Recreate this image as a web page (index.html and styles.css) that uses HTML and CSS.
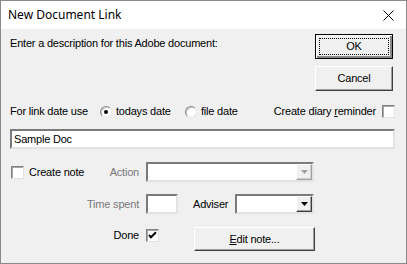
FILE: index.html
```html
<!DOCTYPE html>
<html lang="en">
<head>
    <meta charset="UTF-8">
    <title>New Document Link</title>
    <link rel="stylesheet" href="styles.css">
</head>
<body>
    <div class="window">
        <div class="titlebar">
            <span class="title">New Document Link</span>
            <svg class="close" width="11" height="11" viewBox="0 0 11 11">
                <path d="M0.5 0.5 L10.5 10.5 M10.5 0.5 L0.5 10.5" stroke="#000" stroke-width="1" fill="none"/>
            </svg>
        </div>

        <div class="content">
            <div class="top">
                <div class="prompt">Enter a description for this Adobe document:</div>
                <div class="buttons">
                    <button class="btn btn-default"><span class="focus">OK</span></button>
                    <button class="btn">Cancel</button>
                </div>
            </div>

            <div class="row date-row">
                <span class="date-label">For link date use</span>
                <span class="opt opt-first"><span class="radio checked"></span>todays date</span>
                <span class="opt"><span class="radio"></span>file date</span>
                <span class="diary"><span>Create diary <u>r</u>eminder</span><span class="check"></span></span>
            </div>

            <div class="textbox desc">Sample Doc</div>

            <div class="row ctl-row">
                <div class="lead lead-split">
                    <span class="note"><span class="check"></span>Create note</span>
                    <span class="muted">Action</span>
                </div>
                <div class="textbox combo action">
                    <span class="drop disabled"><svg width="7" height="4" viewBox="0 0 7 4"><path d="M0 0h7L3.5 4z" fill="#a0a0a0"/></svg></span>
                </div>
            </div>

            <div class="row ctl-row">
                <div class="lead"><span class="muted">Time spent</span></div>
                <div class="textbox time"></div>
                <span class="adviser-label">Adviser</span>
                <div class="textbox combo adviser">
                    <span class="drop"><svg width="7" height="4" viewBox="0 0 7 4"><path d="M0 0h7L3.5 4z" fill="#000"/></svg></span>
                </div>
            </div>

            <div class="row done-row">
                <div class="lead">Done</div>
                <span class="check done-check">
                    <svg width="9" height="9" viewBox="0 0 9 9"><path d="M1 4 L3 6.2 L8 1.2" stroke="#000" stroke-width="2" fill="none"/></svg>
                </span>
                <button class="btn edit"><span><u>E</u>dit note...</span></button>
            </div>
        </div>
    </div>
</body>
</html>
```

FILE: styles.css
```css
:root {
    --face: #f0f0f0;
    --edge: #7a7a7a;
    --muted: #7a7a7a;
}

body {
    margin: 0;
    background: var(--face);
    font-family: 'Liberation Sans', Arial, sans-serif;
    font-size: 11px;
    letter-spacing: -0.2px;
    color: #000;
}

.window {
    width: 407px;
    height: 264px;
    box-sizing: border-box;
    border: 1px solid #8a8a8a;
    background: var(--face);
}

.titlebar {
    height: 28px;
    background: #fff;
    display: flex;
    align-items: center;
    padding-left: 7px;
}

.title {
    font-family: 'Noto Sans', sans-serif;
    font-size: 12px;
    letter-spacing: 0;
    color: #000;
    margin-top: -1px;
}

.close {
    margin-left: auto;
    margin-right: 12px;
    margin-top: 1px;
}

.content {
    padding: 5px 11px 0 9px;
    line-height: 13px;
}

.top {
    display: flex;
    justify-content: space-between;
}

.prompt {
    margin-top: 3px;
}

.buttons {
    display: flex;
    flex-direction: column;
    gap: 7px;
    margin-right: 2px;
}

.btn {
    font: inherit;
    letter-spacing: inherit;
    color: #000;
    width: 78px;
    height: 25px;
    padding: 0;
    background: var(--face);
    border: 1px solid;
    border-color: #fff #404040 #404040 #fff;
    box-shadow: inset -1px -1px 0 #a0a0a0;
    display: flex;
    align-items: center;
    justify-content: center;
}

.btn-default {
    border: 1px solid #000;
    box-shadow: inset 1px 1px 0 #fff, inset -2px -2px 0 #8a8a8a;
    padding: 3px;
}

.focus {
    display: flex;
    align-items: center;
    justify-content: center;
    width: 100%;
    height: 100%;
    box-sizing: border-box;
    border: 1px dotted #000;
}

.row {
    display: flex;
    align-items: center;
}

.date-row {
    margin-top: 14px;
    height: 13px;
}

.date-label {
    width: 90px;
}

.opt {
    display: flex;
    align-items: center;
    gap: 4px;
}

.opt-first {
    width: 85px;
}

.radio {
    width: 12px;
    height: 12px;
    box-sizing: border-box;
    border-radius: 50%;
    border: 1px solid;
    border-color: #8a8a8a #e6e6e6 #e6e6e6 #8a8a8a;
    background: #fff;
    box-shadow: inset 1px 1px 0 #c8c8c8;
    position: relative;
}

.radio.checked::after {
    content: "";
    position: absolute;
    left: 3px;
    top: 3px;
    width: 4px;
    height: 4px;
    border-radius: 50%;
    background: #000;
}

.diary {
    margin-left: auto;
    display: flex;
    align-items: center;
    gap: 6px;
}

.check {
    width: 13px;
    height: 13px;
    box-sizing: border-box;
    border: 1px solid;
    border-color: #808080 #e3e3e3 #e3e3e3 #808080;
    box-shadow: inset 1px 1px 0 #a8a8a8;
    background: #fff;
    display: flex;
    align-items: center;
    justify-content: center;
}

.textbox {
    box-sizing: border-box;
    height: 20px;
    background: #fff;
    border: 2px solid;
    border-color: #7a7a7a #e3e3e3 #e3e3e3 #7a7a7a;
}

.desc {
    margin-top: 11px;
    width: 385px;
    padding: 1px 2px;
    line-height: 15px;
}

.ctl-row {
    height: 20px;
    margin-top: 13px;
}

.ctl-row + .ctl-row {
    margin-top: 12px;
}

.lead {
    width: 136px;
    box-sizing: border-box;
    padding-right: 7px;
    text-align: right;
    flex: none;
}

.lead-split {
    display: flex;
    justify-content: space-between;
    align-items: center;
}

.note {
    display: flex;
    align-items: center;
    gap: 5px;
    margin-left: 1px;
}

.muted {
    color: var(--muted);
}

.combo {
    display: flex;
    justify-content: flex-end;
}

.action {
    width: 168px;
}

.drop {
    width: 16px;
    height: 16px;
    box-sizing: border-box;
    background: var(--face);
    border: 1px solid;
    border-color: #fff #404040 #404040 #fff;
    box-shadow: inset -1px -1px 0 #a0a0a0;
    display: flex;
    align-items: center;
    justify-content: center;
}

.drop.disabled {
    border-color: #fff #a0a0a0 #a0a0a0 #fff;
    box-shadow: inset -1px -1px 0 #d0d0d0;
}

.time {
    width: 32px;
}

.adviser-label {
    margin-left: 15px;
    width: 42px;
}

.adviser {
    width: 79px;
}

.done-row {
    margin-top: 13px;
    height: 24px;
    align-items: flex-start;
}

.done-row .lead {
    margin-top: 2px;
}

.done-check {
    margin-top: 2px;
}

.edit {
    width: 121px;
    height: 24px;
    margin-left: 35px;
}
```
